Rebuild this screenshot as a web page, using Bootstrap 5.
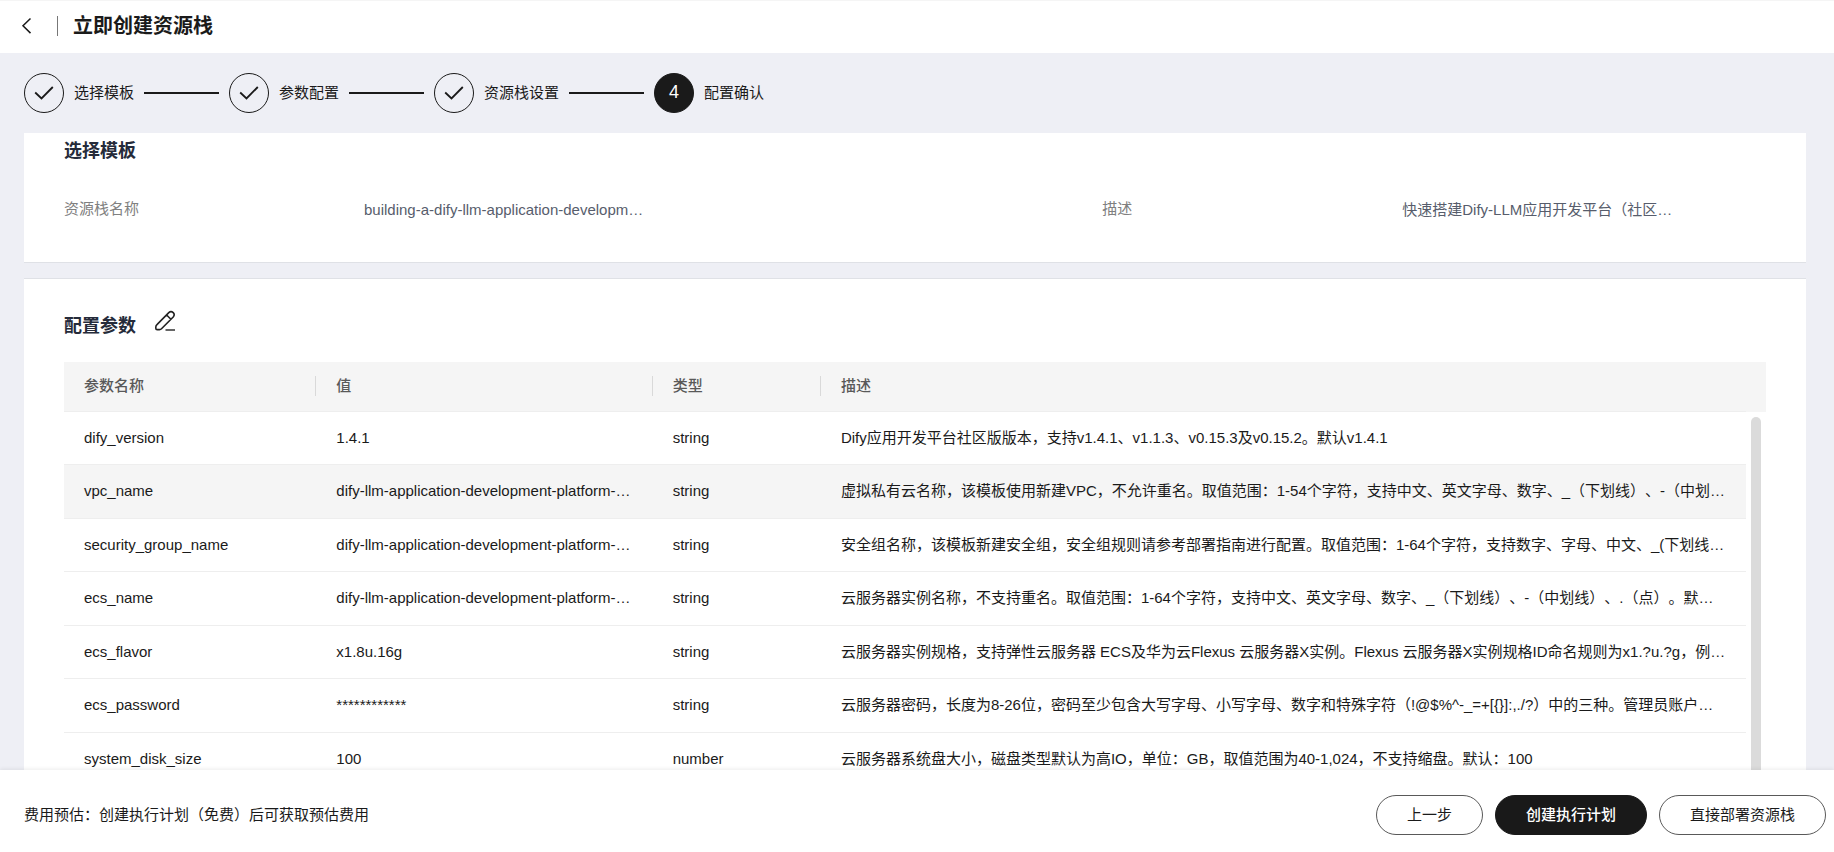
<!DOCTYPE html>
<html lang="zh-CN">
<head>
<meta charset="utf-8">
<meta name="viewport" content="width=device-width, initial-scale=1">
<title>立即创建资源栈</title>
<link href="https://cdn.jsdelivr.net/npm/bootstrap@5.3.0/dist/css/bootstrap.min.css" rel="stylesheet">
<style>
  body {
    font: 15px/20px "Liberation Sans", "Noto Sans CJK SC", sans-serif;
    text-spacing-trim: space-all;
    color: #1a1a1a;
    background: #eeeff5;
  }
  .topbar { height: 53px; border-top: 1px solid #f5f5f5; padding: 0 20px 2px; }
  .topbar h1 { font-size: 20px; line-height: 24px; }
  .back-btn { width: 12px; height: 20px; }
  .rule { width: 1px; height: 20px; background: #777; margin: 0 15px 0 25px; }
  .workspace { min-height: 0; padding: 0 28px 0 24px; }
  .steps { height: 80px; gap: 10px; }
  .step-item { gap: 10px; }
  .step-item:not(:last-child)::after { content: ""; width: 75px; height: 2px; background: #1a1a1a; }
  .dot { width: 40px; height: 40px; border: 1px solid #1a1a1a; }
  .dot-now { background: #1a1a1a; color: #fff; font-size: 18px; padding-bottom: 2px; }
  .panel { background: #fff; padding: 0 40px; }
  .panel h2 { font-size: 18px; line-height: 24px; color: #252b3a; }
  .panel-template { padding-top: 6px; padding-bottom: 42px; border-bottom: 1px solid #dfe1e6; }
  .panel-params { margin-top: 15px; padding-top: 31px; padding-bottom: 40px; border-top: 1px solid #dfe1e6; }
  .facts { display: grid; grid-template-columns: 61% 39%; margin-top: 36px; }
  .facts dt { width: 300px; font-weight: 400; color: #808080; }
  .facts dd { width: 280px; padding-top: 1px; color: #575d6c; }
  .params-title { height: 28px; gap: 18px; margin-bottom: 24px; }
  .params { table-layout: fixed; }
  .params th { height: 49px; padding: 0 20px; font-weight: 500; color: #595959; background: #f5f5f5; border-bottom: 1px solid #eee; }
  .params th:not(:last-of-type) { background: linear-gradient(#d9d9d9, #d9d9d9) right center / 1px 20px no-repeat #f5f5f5; }
  .params td { height: 53px; padding: 0 20px; border-bottom: 1px solid #eee; }
  .params tbody tr:nth-child(even) td { height: 54px; }
  .params tr.hovered td { background: #f5f5f5; }
  .params-side { width: 20px; flex: none; }
  .side-cap { height: 50px; background: #f5f5f5; }
  .thumb { width: 10px; margin: 5px 5px 0; border-radius: 5px; background: #dbdbdb; }
  .actions { height: 82px; padding: 8px 8px 0 24px; background: #fff; box-shadow: 0 -1px 4px rgba(0, 0, 0, .08); position: relative; }
  .action-set { gap: 12px; }
  .btn-pill { height: 40px; padding: 0 30px; font-size: 15px; line-height: 20px; border: 1px solid #595959; border-radius: 20px; color: #1a1a1a; background: #fff; }
  .btn-pill.btn-main { background: #191919; border-color: #191919; color: #fff; font-weight: 500; }
</style>
</head>
<body>
<div class="d-flex flex-column vh-100 overflow-hidden">

  <header class="topbar bg-white d-flex align-items-center flex-shrink-0">
    <button type="button" class="back-btn btn border-0 p-0 d-flex" aria-label="返回">
      <svg width="12" height="20" viewBox="0 0 12 20" fill="none" stroke="#1a1a1a" stroke-width="1.5"><path d="M10.500 2.500 3 9.800l7.500 7.300"/></svg>
    </button>
    <span class="rule"></span>
    <h1 class="fw-bold mb-0">立即创建资源栈</h1>
  </header>

  <main class="workspace flex-grow-1 overflow-hidden">
    <ol class="steps list-unstyled d-flex align-items-center mb-0">
      <li class="step-item d-flex align-items-center">
        <span class="dot rounded-circle d-flex align-items-center justify-content-center"><svg width="20" height="14" viewBox="0 0 20 14" fill="none" stroke="#1a1a1a" stroke-width="1.800"><path d="M1.200 6.500 7.500 12.500 18.800 1"/></svg></span>
        <span>选择模板</span>
      </li>
      <li class="step-item d-flex align-items-center">
        <span class="dot rounded-circle d-flex align-items-center justify-content-center"><svg width="20" height="14" viewBox="0 0 20 14" fill="none" stroke="#1a1a1a" stroke-width="1.800"><path d="M1.200 6.500 7.500 12.500 18.800 1"/></svg></span>
        <span>参数配置</span>
      </li>
      <li class="step-item d-flex align-items-center">
        <span class="dot rounded-circle d-flex align-items-center justify-content-center"><svg width="20" height="14" viewBox="0 0 20 14" fill="none" stroke="#1a1a1a" stroke-width="1.800"><path d="M1.200 6.500 7.500 12.500 18.800 1"/></svg></span>
        <span>资源栈设置</span>
      </li>
      <li class="step-item d-flex align-items-center" aria-current="step">
        <span class="dot dot-now rounded-circle d-flex align-items-center justify-content-center">4</span>
        <span>配置确认</span>
      </li>
    </ol>

    <section class="panel panel-template">
      <h2 class="fw-bold mb-0">选择模板</h2>
      <dl class="facts mb-0">
        <div class="d-flex">
          <dt>资源栈名称</dt>
          <dd class="text-truncate mb-0">building-a-dify-llm-application-development-platform</dd>
        </div>
        <div class="d-flex">
          <dt>描述</dt>
          <dd class="text-truncate mb-0">快速搭建Dify-LLM应用开发平台（社区版）</dd>
        </div>
      </dl>
    </section>

    <section class="panel panel-params">
      <div class="params-title d-flex align-items-end">
        <h2 class="fw-bold mb-0">配置参数</h2>
        <button type="button" class="btn border-0 p-0 d-flex align-self-start" aria-label="编辑">
          <svg width="22" height="22" viewBox="0 0 22 22" fill="none" stroke="#222" stroke-width="1.600" stroke-linejoin="round"><path d="M3.200 14.400 14.800 2.600q2.200-2 4.400 0 2 2.200 0 4.400L7.500 18.800q-.8.800-2 .8H3.200q-1.400 0-1.400-1.400V17q0-1.400 1.400-2.600ZM12.600 5l4.300 4.300"/><path d="M11.500 20h9.500" stroke="#555" stroke-width="1.800"/></svg>
        </button>
      </div>
      <div class="d-flex">
        <table class="params w-100">
          <colgroup><col style="width:15%"><col style="width:20%"><col style="width:10%"><col style="width:55%"></colgroup>
          <thead>
            <tr><th>参数名称</th><th>值</th><th>类型</th><th>描述</th></tr>
          </thead>
          <tbody>
            <tr><td class="text-truncate">dify_version</td><td class="text-truncate">1.4.1</td><td>string</td><td class="text-truncate">Dify应用开发平台社区版版本，支持v1.4.1、v1.1.3、v0.15.3及v0.15.2。默认v1.4.1</td></tr>
            <tr class="hovered"><td class="text-truncate">vpc_name</td><td class="text-truncate">dify-llm-application-development-platform-demo</td><td>string</td><td class="text-truncate">虚拟私有云名称，该模板使用新建VPC，不允许重名。取值范围：1-54个字符，支持中文、英文字母、数字、_（下划线）、-（中划线）</td></tr>
            <tr><td class="text-truncate">security_group_name</td><td class="text-truncate">dify-llm-application-development-platform-demo</td><td>string</td><td class="text-truncate">安全组名称，该模板新建安全组，安全组规则请参考部署指南进行配置。取值范围：1-64个字符，支持数字、字母、中文、_(下划线)、-（中划线）</td></tr>
            <tr><td class="text-truncate">ecs_name</td><td class="text-truncate">dify-llm-application-development-platform-demo</td><td>string</td><td class="text-truncate">云服务器实例名称，不支持重名。取值范围：1-64个字符，支持中文、英文字母、数字、_（下划线）、-（中划线）、.（点）。默认dify-demo</td></tr>
            <tr><td class="text-truncate">ecs_flavor</td><td class="text-truncate">x1.8u.16g</td><td>string</td><td class="text-truncate">云服务器实例规格，支持弹性云服务器 ECS及华为云Flexus 云服务器X实例。Flexus 云服务器X实例规格ID命名规则为x1.?u.?g，例如x1.8u.16g</td></tr>
            <tr><td class="text-truncate">ecs_password</td><td class="text-truncate">************</td><td>string</td><td class="text-truncate">云服务器密码，长度为8-26位，密码至少包含大写字母、小写字母、数字和特殊字符（!@$%^-_=+[{}]:,./?）中的三种。管理员账户默认root</td></tr>
            <tr><td class="text-truncate">system_disk_size</td><td class="text-truncate">100</td><td>number</td><td class="text-truncate">云服务器系统盘大小，磁盘类型默认为高IO，单位：GB，取值范围为40-1,024，不支持缩盘。默认：100</td></tr>
          </tbody>
        </table>
        <div class="params-side d-flex flex-column">
          <div class="side-cap"></div>
          <div class="thumb flex-grow-1"></div>
        </div>
      </div>
    </section>
  </main>

  <footer class="actions d-flex align-items-center justify-content-between flex-shrink-0">
    <span>费用预估：创建执行计划（免费）后可获取预估费用</span>
    <div class="action-set d-flex">
      <button type="button" class="btn btn-pill">上一步</button>
      <button type="button" class="btn btn-pill btn-main">创建执行计划</button>
      <button type="button" class="btn btn-pill">直接部署资源栈</button>
    </div>
  </footer>
</div>
<script src="https://cdn.jsdelivr.net/npm/bootstrap@5.3.0/dist/js/bootstrap.bundle.min.js"></script>
</body>
</html>
